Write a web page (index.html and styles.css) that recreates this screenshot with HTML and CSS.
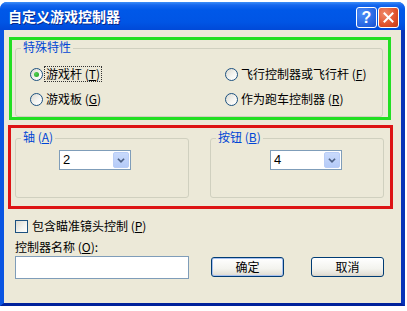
FILE: index.html
```html
<!DOCTYPE html>
<html lang="zh">
<head>
<meta charset="utf-8">
<title>自定义游戏控制器</title>
<link rel="stylesheet" href="styles.css">
</head>
<body>
<div class="window">
  <div class="titlebar">
    <span class="title">自定义游戏控制器</span>
    <div class="tbtns">
      <span class="tbtn help">?</span>
      <span class="tbtn close"><svg width="13" height="13" viewBox="0 0 13 13"><path d="M2.5 2.5 L10.5 10.5 M10.5 2.5 L2.5 10.5" stroke="#fff" stroke-width="2" stroke-linecap="square"/></svg></span>
    </div>
  </div>
  <div class="frame">
    <div class="client">
      <div class="hl hl-green">
        <div class="group group-top">
          <span class="glabel">特殊特性</span>
          <div class="radios">
            <div class="radio"><span class="circle checked"></span><span class="rtext focus">游戏杆 (<u>T</u>)</span></div>
            <div class="radio"><span class="circle"></span><span class="rtext">飞行控制器或飞行杆 (<u>F</u>)</span></div>
            <div class="radio"><span class="circle"></span><span class="rtext">游戏板 (<u>G</u>)</span></div>
            <div class="radio"><span class="circle"></span><span class="rtext">作为跑车控制器 (<u>R</u>)</span></div>
          </div>
        </div>
      </div>
      <div class="hl hl-red">
        <div class="group group-half">
          <span class="glabel">轴 (<u>A</u>)</span>
          <div class="combo combo-axis"><span class="cval">2</span><span class="drop"><svg width="16" height="17" viewBox="0 0 16 17"><path d="M4.5 6.5 L8 10 L11.5 6.5" fill="none" stroke="#4D6185" stroke-width="2"/></svg></span></div>
        </div>
        <div class="group group-half">
          <span class="glabel">按钮 (<u>B</u>)</span>
          <div class="combo combo-btn"><span class="cval">4</span><span class="drop"><svg width="16" height="17" viewBox="0 0 16 17"><path d="M4.5 6.5 L8 10 L11.5 6.5" fill="none" stroke="#4D6185" stroke-width="2"/></svg></span></div>
        </div>
      </div>
      <div class="check"><span class="cbox"></span><span class="ctext">包含瞄准镜头控制 (<u>P</u>)</span></div>
      <div class="bottom">
        <div class="namecol">
          <div class="namelabel">控制器名称 (<u>O</u>):</div>
          <div class="textbox"></div>
        </div>
        <div class="btns">
          <span class="btn ok">确定</span>
          <span class="btn cancel">取消</span>
        </div>
      </div>
    </div>
  </div>
</div>
</body>
</html>
```
FILE: styles.css
```css
html, body {
  margin: 0;
  background: #ffffff;
}
body {
  font-family: "Noto Sans CJK SC", "Liberation Sans", sans-serif;
  font-size: 12px;
  color: #000;
}
u { text-decoration: underline; text-underline-offset: 1px; }

.window {
  margin-top: 2px;
  width: 405px;
  height: 304px;
  display: flex;
  flex-direction: column;
  border-radius: 7px 7px 0 0;
  overflow: hidden;
  background: #0055E5;
}
.titlebar {
  height: 28px;
  flex: none;
  display: flex;
  align-items: flex-start;
  padding: 0 6px 0 8px;
  background: linear-gradient(#3D8FF8 0px, #1667EE 3px, #0058E8 8px, #0055E5 20px, #0049D8 28px);
}
.title {
  color: #fff;
  font-weight: bold;
  font-size: 14px;
  line-height: 28px;
  text-shadow: 1px 1px 0 #0A2A8A;
}
.tbtns {
  margin-left: auto;
  display: flex;
  gap: 1px;
  padding-top: 5px;
}
.tbtn {
  width: 21px;
  height: 21px;
  box-sizing: border-box;
  border: 1px solid #fff;
  border-radius: 3px;
  display: flex;
  align-items: center;
  justify-content: center;
  color: #fff;
  font-family: "Liberation Sans", sans-serif;
  font-weight: bold;
  font-size: 16px;
  line-height: 1;
}
.help { background: radial-gradient(circle at 30% 30%, #4C8DF8, #2462E0 70%, #1C4FCB); }
.close { background: radial-gradient(circle at 30% 30%, #F08A6A, #E0522C 60%, #C43A14); }

.frame {
  flex: 1;
  display: flex;
  border-left: 4px solid #0A55E2;
  border-right: 4px solid #0633B8;
  border-bottom: 3px solid #00229C;
}
.client {
  flex: 1;
  background: #ECE9D8;
  display: flex;
  flex-direction: column;
}

.hl { box-sizing: border-box; border-style: solid; border-width: 3px; }
.hl-green {
  border-color: #22DF22;
  margin: 7px 0 0 5px;
  width: 382px;
  height: 83px;
}
.hl-red {
  border-color: #DD1414;
  margin: 5px 0 0 4px;
  width: 385px;
  height: 84px;
  display: flex;
  gap: 21px;
  padding-left: 4px;
}

.group {
  box-sizing: border-box;
  border: 1px solid #D0D0BF;
  border-radius: 3px;
  display: flex;
  flex-direction: column;
  align-items: flex-start;
}
.glabel {
  margin: -9px 0 0 5px;
  padding: 0 2px;
  background: #ECE9D8;
  color: #0046D5;
  line-height: 14px;
  height: 14px;
}
.group-top {
  margin: 8px 0 0 3px;
  width: 368px;
  height: 69px;
}
.radios {
  margin-top: 12px;
  padding-left: 14px;
  display: grid;
  grid-template-columns: 195px 1fr;
  row-gap: 9px;
}
.radio {
  display: flex;
  align-items: center;
  height: 16px;
}
.circle {
  width: 13px;
  height: 13px;
  box-sizing: border-box;
  border: 1px solid #1C5180;
  border-radius: 50%;
  background: linear-gradient(135deg, #DCDAD0, #F6F6F3 60%, #FFFFFF);
  display: flex;
  align-items: center;
  justify-content: center;
}
.circle.checked::after {
  content: "";
  width: 5px;
  height: 5px;
  border-radius: 50%;
  background: radial-gradient(circle at 35% 35%, #55D155, #21A121);
}
.rtext {
  margin-left: 1px;
  padding: 0 1px;
  border: 1px dotted transparent;
  line-height: 14px;
}
.rtext.focus { border-color: #333; }

.group-half {
  margin-top: 10px;
  width: 174px;
  height: 60px;
}
.combo {
  margin-top: 6px;
  width: 72px;
  height: 20px;
  box-sizing: border-box;
  border: 1px solid #7F9DB9;
  background: #fff;
  display: flex;
  align-items: center;
  justify-content: space-between;
  padding: 1px;
}
.combo-axis { margin-left: 43px; }
.combo-btn { margin-left: 59px; }
.cval {
  padding-left: 2px;
  font-family: "Liberation Sans", sans-serif;
  font-size: 13px;
  line-height: 16px;
}
.drop {
  width: 16px;
  height: 16px;
  box-sizing: border-box;
  border-radius: 2px;
  background: linear-gradient(#C9DAFC, #B5CBF8);
  border: 1px solid #B9CDF6;
  display: flex;
  align-items: center;
  justify-content: center;
}
.drop svg { display: block; }

.check {
  margin: 10px 0 0 11px;
  display: flex;
  align-items: center;
  height: 14px;
}
.cbox {
  width: 13px;
  height: 13px;
  box-sizing: border-box;
  border: 1px solid #1C5180;
  background: linear-gradient(135deg, #DCDAD0, #F4F4F0 60%, #FFFFFF);
}
.ctext {
  margin-left: 4px;
  line-height: 14px;
}

.bottom {
  margin: 7px 0 0 11px;
  display: flex;
  align-items: flex-end;
}
.namelabel {
  line-height: 14px;
  height: 14px;
}
.textbox {
  margin-top: 2px;
  width: 174px;
  height: 23px;
  box-sizing: border-box;
  border: 1px solid #7F9DB9;
  background: #fff;
}
.btns {
  display: flex;
  gap: 27px;
  margin: 0 0 2px 22px;
}
.btn {
  width: 73px;
  height: 20px;
  box-sizing: border-box;
  border: 1px solid #003C74;
  border-radius: 3px;
  background: linear-gradient(#FFFFFF, #F3F3EE 60%, #E4E1D8 90%, #D6D0C5);
  display: flex;
  align-items: center;
  justify-content: center;
  line-height: 14px;
}
.ok { box-shadow: inset 0 0 0 1px #A8C0EF; }
```
